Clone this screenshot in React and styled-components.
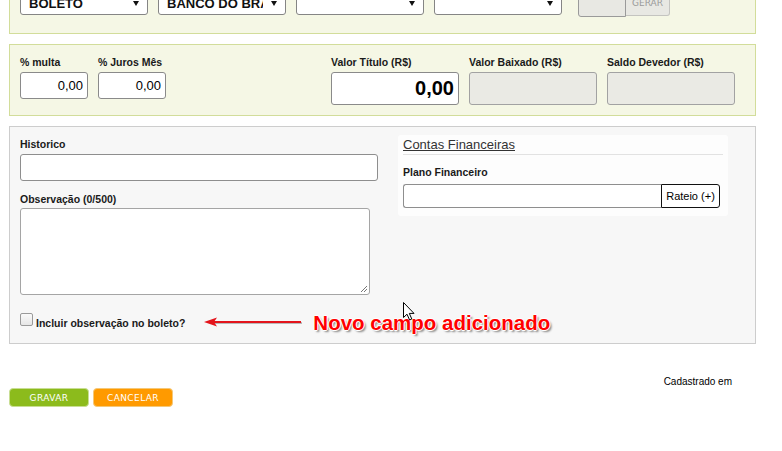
import styled, { createGlobalStyle } from "styled-components";

const GlobalStyle = createGlobalStyle`
  html, body {
    margin: 0;
    padding: 0;
    background: #fff;
    font-family: "Liberation Sans", Arial, sans-serif;
    color: #222;
  }
  * {
    box-sizing: border-box;
  }
`;

const App = () => {
  return (
    <>
      <GlobalStyle />
      <Page>
        <GreenPanel $top>
          <SelectBox>
            <span>BOLETO</span>
            <Caret />
          </SelectBox>
          <SelectBox>
            <span>BANCO DO BRASIL</span>
            <Caret />
          </SelectBox>
          <SelectBox>
            <span />
            <Caret />
          </SelectBox>
          <SelectBox>
            <span />
            <Caret />
          </SelectBox>
          <GenerateGroup>
            <GrayInput />
            <GenerateButton>GERAR</GenerateButton>
          </GenerateGroup>
        </GreenPanel>

        <GreenPanel>
          <Field>
            <Label>% multa</Label>
            <NumberInput $w={68}>0,00</NumberInput>
          </Field>
          <Field>
            <Label>% Juros Mês</Label>
            <NumberInput $w={68}>0,00</NumberInput>
          </Field>
          <ValuesGroup>
            <Field>
              <Label>Valor Título (R$)</Label>
              <NumberInput $w={128} $big>0,00</NumberInput>
            </Field>
            <Field>
              <Label>Valor Baixado (R$)</Label>
              <NumberInput $w={128} $big $disabled />
            </Field>
            <Field>
              <Label>Saldo Devedor (R$)</Label>
              <NumberInput $w={128} $big $disabled />
            </Field>
          </ValuesGroup>
        </GreenPanel>

        <GrayPanel>
          <LeftColumn>
            <Label>Historico</Label>
            <TextInput />
            <Label $gap={11}>Observação (0/500)</Label>
            <TextArea>
              <ResizeGrip viewBox="0 0 8 8">
                <path d="M7 1 L1 7 M7 4 L4 7" stroke="#777" strokeWidth="1" />
              </ResizeGrip>
            </TextArea>
            <CheckRow>
              <Checkbox />
              <CheckLabel>Incluir observação no boleto?</CheckLabel>
              <ArrowMark viewBox="0 0 100 12">
                <line x1="11" y1="7" x2="98" y2="7" stroke="rgba(0,0,0,0.25)" strokeWidth="2" />
                <line x1="10" y1="6" x2="97" y2="6" stroke="#e3141b" strokeWidth="2.2" />
                <polygon points="0,6 13,1.5 10,6 13,10.5" fill="#e3141b" />
              </ArrowMark>
              <Annotation>Novo campo adicionado</Annotation>
            </CheckRow>
          </LeftColumn>

          <RightColumn>
            <FinanceBox>
              <FinanceHeader>
                <span>Contas Financeiras</span>
              </FinanceHeader>
              <Label $gap={10}>Plano Financeiro</Label>
              <PlanRow>
                <PlanInput />
                <RateioButton>Rateio (+)</RateioButton>
              </PlanRow>
            </FinanceBox>
          </RightColumn>

          <Cursor viewBox="0 0 12 19">
            <path
              d="M0.5 0.5 L0.5 15.5 L4 12.2 L6.6 18 L8.8 17 L6.3 11.4 L11 11.4 Z"
              fill="#fff"
              stroke="#000"
              strokeWidth="1"
              strokeLinejoin="round"
            />
          </Cursor>
        </GrayPanel>

        <Footer>
          <CreatedAt>Cadastrado em</CreatedAt>
          <ButtonRow>
            <ActionButton $color="#8cbb1c" $border="#c8de93">
              GRAVAR
            </ActionButton>
            <ActionButton $color="#ff9a00" $border="#f5c878">
              CANCELAR
            </ActionButton>
          </ButtonRow>
        </Footer>
      </Page>
    </>
  );
};

export default App;

const Page = styled.div`
  width: 747px;
  margin-left: 9px;
`;

const GreenPanel = styled.section`
  display: flex;
  align-items: flex-start;
  gap: 10px;
  margin-top: ${({ $top }) => ($top ? "-20px" : "0")};
  margin-bottom: 10px;
  padding: ${({ $top }) => ($top ? "10px 10px 16px" : "10px 10px 10px")};
  background: #f5f7e5;
  border: 1px solid #d2dd9a;
`;

const SelectBox = styled.div`
  position: relative;
  width: 128px;
  height: 24px;
  padding: 0 22px 0 8px;
  display: flex;
  align-items: center;
  background: #fff;
  border: 1px solid #858585;
  border-radius: 3px;
  font-size: 13px;
  font-weight: bold;
  color: #111;
  overflow: hidden;

  span {
    white-space: nowrap;
    overflow: hidden;
  }
`;

const Caret = styled.i`
  position: absolute;
  right: 8px;
  top: 9px;
  width: 0;
  height: 0;
  border-left: 3px solid transparent;
  border-right: 3px solid transparent;
  border-top: 5px solid #111;
`;

const GenerateGroup = styled.div`
  display: flex;
  margin-left: 6px;
`;

const GrayInput = styled.div`
  width: 48px;
  height: 26px;
  background: #e8e8e3;
  border: 1px solid #9a9a9a;
  border-radius: 3px 0 0 3px;
`;

const GenerateButton = styled.div`
  width: 44px;
  height: 25px;
  display: flex;
  align-items: flex-end;
  justify-content: center;
  padding-bottom: 7px;
  background: #e8e8e3;
  border: 1px solid #c4c4c0;
  border-left: none;
  border-radius: 0 3px 3px 0;
  font-family: "DejaVu Sans", sans-serif;
  font-size: 9px;
  color: #9a9a9a;
`;

const Field = styled.div`
  display: flex;
  flex-direction: column;
`;

const ValuesGroup = styled.div`
  display: flex;
  gap: 10px;
  margin-left: 155px;
`;

const Label = styled.label`
  display: block;
  padding-top: 1px;
  font-size: 10.5px;
  font-weight: bold;
  line-height: 13px;
  color: #1a1a1a;
  margin-top: ${({ $gap }) => ($gap ? `${$gap}px` : "0")};
  margin-bottom: 3px;
  white-space: nowrap;
`;

const NumberInput = styled.div`
  width: ${({ $w }) => $w}px;
  height: ${({ $big }) => ($big ? "33px" : "27px")};
  padding-right: 4px;
  display: flex;
  align-items: center;
  justify-content: flex-end;
  background: ${({ $disabled }) => ($disabled ? "#eaeae4" : "#fff")};
  border: 1px solid ${({ $disabled }) => ($disabled ? "#a2a2a2" : "#8a8a8a")};
  border-radius: 3px;
  font-size: ${({ $big }) => ($big ? "20px" : "13px")};
  font-weight: ${({ $big }) => ($big ? "bold" : "normal")};
  color: #000;
`;

const GrayPanel = styled.section`
  position: relative;
  display: flex;
  gap: 20px;
  padding: 10px 10px 13px;
  background: #f7f7f7;
  border: 1px solid #cdcdcd;
`;

const LeftColumn = styled.div`
  width: 358px;
  display: flex;
  flex-direction: column;
`;

const TextInput = styled.div`
  width: 358px;
  height: 27px;
  background: #fff;
  border: 1px solid #8e8e8e;
  border-radius: 3px;
`;

const TextArea = styled.div`
  position: relative;
  width: 350px;
  height: 87px;
  margin-top: -1px;
  background: #fff;
  border: 1px solid #a5a5a5;
  border-radius: 3px;
`;

const ResizeGrip = styled.svg`
  position: absolute;
  right: 1px;
  bottom: 1px;
  width: 8px;
  height: 8px;
`;

const CheckRow = styled.div`
  display: flex;
  align-items: center;
  margin-top: 17px;
  height: 18px;
`;

const Checkbox = styled.span`
  flex: none;
  display: block;
  width: 13px;
  height: 13px;
  margin-top: -4px;
  background: linear-gradient(#fafafa, #e6e6e6);
  border: 1px solid #9a9a9a;
  border-radius: 2px;
`;

const CheckLabel = styled.span`
  margin-left: 3px;
  margin-top: 3px;
  font-size: 10.5px;
  font-weight: bold;
  color: #1a1a1a;
  white-space: nowrap;
`;

const ArrowMark = styled.svg`
  flex: none;
  width: 100px;
  height: 12px;
  margin-left: 19px;
  margin-top: 1px;
`;

const Annotation = styled.span`
  margin-left: 9px;
  margin-top: 3px;
  font-size: 20.5px;
  font-weight: bold;
  color: #ff0000;
  white-space: nowrap;
  text-shadow: 1px 0 0 #fff, -1px 0 0 #fff, 0 -1px 0 #fff, 0 1px 0 #fff,
    2px 2px 2px rgba(0, 0, 0, 0.45);
`;

const RightColumn = styled.div`
  padding-top: 9px;
`;

const FinanceBox = styled.div`
  width: 330px;
  padding: 0 5px 8px;
  background: #fdfdfd;
  border-radius: 3px;
`;

const FinanceHeader = styled.div`
  margin-top: -11px;
  height: 20px;
  border-bottom: 1px solid #e2e2e2;

  span {
    font-size: 13px;
    line-height: 15px;
    color: #333;
    text-decoration: underline;
  }
`;

const PlanRow = styled.div`
  display: flex;
  margin-top: 5px;
`;

const PlanInput = styled.div`
  width: 258px;
  height: 24px;
  background: #fff;
  border: 1px solid #8e8e8e;
  border-right: none;
  border-radius: 3px 0 0 3px;
`;

const RateioButton = styled.div`
  width: 59px;
  height: 24px;
  display: flex;
  align-items: center;
  justify-content: center;
  background: #fff;
  border: 1px solid #111;
  border-radius: 0 3px 3px 0;
  font-size: 11px;
  color: #000;
`;

const Cursor = styled.svg`
  position: absolute;
  left: 393px;
  top: 175px;
  width: 12px;
  height: 19px;
`;

const Footer = styled.footer`
  padding-top: 31px;
`;

const CreatedAt = styled.div`
  text-align: right;
  padding-right: 24px;
  font-size: 10px;
  line-height: 13px;
  color: #000;
`;

const ButtonRow = styled.div`
  display: flex;
  gap: 4px;
`;

const ActionButton = styled.button`
  width: 80px;
  height: 19px;
  padding: 0;
  background: ${({ $color }) => $color};
  border: 1px solid ${({ $border }) => $border};
  border-radius: 4px;
  font-family: "DejaVu Sans", sans-serif;
  font-size: 9px;
  letter-spacing: 0.4px;
  color: #fff;
  cursor: pointer;
`;
